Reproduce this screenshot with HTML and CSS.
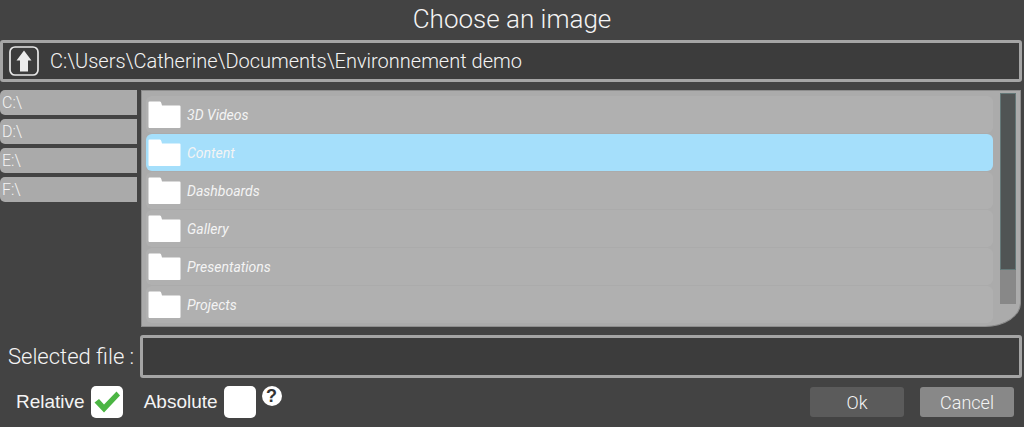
FILE: index.html
```html
<!DOCTYPE html>
<html lang="en">
<head>
<meta charset="utf-8">
<meta name="viewport" content="width=device-width, initial-scale=1">
<title>Choose an image</title>
<link rel="stylesheet" href="styles.css">
</head>
<body>
<svg class="symbols" aria-hidden="true">
  <symbol id="folder" viewBox="0 0 33 28"><path d="M1.500 0.500H12Q13 0.500 13.300 2L14 4.500H31.500Q32.500 4.500 32.500 5.500V26Q32.500 27 31.500 27H1.500Q0.500 27 0.500 26V1.500Q0.500 0.500 1.500 0.500Z" fill="#fff"/></symbol>
</svg>
<main class="dialog">
  <h1 class="title">Choose an image</h1>
  <div class="path-bar">
    <button class="up" type="button" aria-label="Parent folder">
      <svg width="30" height="30" viewBox="0 0 30 30"><rect x="1" y="1" width="28" height="28" rx="5" fill="none" stroke="#e8e8e8" stroke-width="1.700"/><path d="M15 4.500L22.500 14.500H19V25.500H11V14.500H7.500Z" fill="#ececec"/></svg>
    </button>
    <span class="path">C:\Users\Catherine\Documents\Environnement demo</span>
  </div>
  <div class="browser">
    <nav class="drives" aria-label="Drives">
      <button class="drive" type="button">C:\</button>
      <button class="drive" type="button">D:\</button>
      <button class="drive" type="button">E:\</button>
      <button class="drive" type="button">F:\</button>
    </nav>
    <section class="panel" aria-label="Folders">
      <div class="folders">
        <button class="folder" type="button"><svg class="folder-icon"><use href="#folder"/></svg>3D Videos</button>
        <button class="folder selected" type="button"><svg class="folder-icon"><use href="#folder"/></svg>Content</button>
        <button class="folder" type="button"><svg class="folder-icon"><use href="#folder"/></svg>Dashboards</button>
        <button class="folder" type="button"><svg class="folder-icon"><use href="#folder"/></svg>Gallery</button>
        <button class="folder" type="button"><svg class="folder-icon"><use href="#folder"/></svg>Presentations</button>
        <button class="folder" type="button"><svg class="folder-icon"><use href="#folder"/></svg>Projects</button>
      </div>
      <div class="scrollbar"><div class="thumb"></div></div>
    </section>
  </div>
  <div class="file-row">
    <label class="file-label" for="file">Selected file :</label>
    <input class="file-input" id="file" type="text">
  </div>
  <div class="footer">
    <label class="option" for="relative">Relative</label>
    <span class="check">
      <input class="box" id="relative" type="checkbox" checked>
      <svg class="tick" viewBox="0 0 32 32" aria-hidden="true"><path d="M3.500 16.500L8 13L13 18.500L25.500 5.500L29 9.500L13 26.500Z" fill="#4bb543"/></svg>
    </span>
    <label class="option absolute-option" for="absolute">Absolute</label>
    <span class="check">
      <input class="box" id="absolute" type="checkbox">
      <svg class="tick" viewBox="0 0 32 32" aria-hidden="true"><path d="M3.500 16.500L8 13L13 18.500L25.500 5.500L29 9.500L13 26.500Z" fill="#4bb543"/></svg>
    </span>
    <button class="help" type="button">?</button>
    <div class="actions">
      <button class="action ok" type="button">Ok</button>
      <button class="action cancel" type="button">Cancel</button>
    </div>
  </div>
</main>
</body>
</html>
```

FILE: styles.css
```css
* { box-sizing: border-box; }
body {
  margin: 0;
  background: #434343;
  color: #f4f4f4;
  font-family: Roboto, "Open Sans", sans-serif;
  font-weight: 300;
}
button { border: 0; padding: 0; font: inherit; color: inherit; }
.symbols { display: none; }
.dialog { display: flex; flex-direction: column; }
.title {
  margin: 0;
  height: 40px;
  line-height: 38px;
  text-align: center;
  font-size: 26px;
  font-weight: 300;
}
.path-bar {
  display: flex;
  align-items: center;
  gap: 11px;
  height: 42px;
  margin-right: 2px;
  padding-left: 6px;
  background: #3c3c3c;
  border: 3px solid #a5a5a5;
  border-radius: 3px;
}
.up { display: flex; background: none; }
.path { font-size: 20px; line-height: 28px; }
.browser { display: flex; gap: 4px; margin: 8px 3px 0 0; }
.drives { display: flex; flex-direction: column; gap: 4px; width: 137px; }
.drive {
  height: 25px;
  padding-left: 2px;
  background: #aaa;
  border-radius: 5px 0 0 5px;
  text-align: left;
  font-size: 16px;
  line-height: 25px;
}
.panel {
  flex: 1;
  display: flex;
  gap: 7px;
  padding: 5px 4px 3px 4px;
  background: #ababab;
  border: 1px solid #8d8d8d;
  border-bottom-right-radius: 36px 24px;
}
.folders { flex: 1; display: flex; flex-direction: column; gap: 1px; }
.folder {
  display: flex;
  align-items: center;
  gap: 6px;
  height: 37px;
  padding-left: 2px;
  background: #b0b0b0;
  border-radius: 6px;
  font-size: 14px;
  font-style: italic;
  font-weight: 400;
}
.selected { background: #a5dffb; }
.folder-icon { width: 33px; height: 28px; }
.scrollbar {
  width: 16px;
  height: 211px;
  margin-top: -3px;
  background: #888;
}
.thumb { height: 84%; background: #505454; border: 1px solid #647878; }
.file-row { display: flex; align-items: center; margin: 8px 2px 0 0; }
.file-label { width: 140px; padding-left: 8px; font-size: 22px; white-space: nowrap; }
.file-input {
  flex: 1;
  min-width: 0;
  height: 43px;
  padding: 0 8px;
  background: #3c3c3c;
  border: 3px solid #a5a5a5;
  border-radius: 3px;
  color: inherit;
  font: inherit;
  font-size: 20px;
}
.footer {
  display: flex;
  align-items: center;
  gap: 6px;
  padding: 8px 10px 8px 16px;
}
.option { font-family: "Liberation Sans", sans-serif; font-size: 19px; font-weight: 400; }
.absolute-option { margin-left: 15px; }
.check { display: grid; }
.box, .tick { grid-area: 1 / 1; width: 32px; height: 32px; margin: 0; }
.box { appearance: none; background: #fff; border-radius: 5px; }
.tick { visibility: hidden; pointer-events: none; }
.box:checked + .tick { visibility: visible; }
.help {
  align-self: flex-start;
  width: 20px;
  height: 20px;
  border-radius: 50%;
  background: #fff;
  color: #333;
  font: bold 18px/20px "Liberation Sans", sans-serif;
}
.actions { display: flex; gap: 16px; margin-left: auto; }
.action { width: 94px; height: 30px; border-radius: 3px; font-size: 18px; }
.ok { background: #5b5b5b; }
.cancel { background: #888; }
```
